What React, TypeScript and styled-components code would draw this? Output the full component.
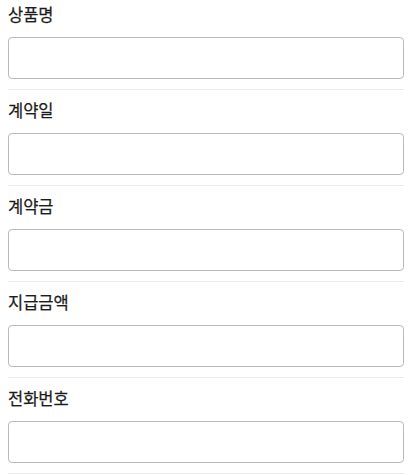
import React from "react";
import styled, { createGlobalStyle } from "styled-components";

const Global = createGlobalStyle`
  html, body { margin: 0; padding: 0; background: #fff; }
  body { font-family: "Noto Sans CJK KR", "Noto Sans", sans-serif; }
`;

const Form = styled.div`
  padding: 0 13px 0 8px;
  display: flex;
  flex-direction: column;
`;

const Field = styled.div`
  display: flex;
  flex-direction: column;
  padding: 10px 0 10px;
  border-bottom: 1px solid #ebebeb;
  &:first-child { padding-top: 4px; }
`;

const Label = styled.label`
  font-size: 16.5px;
  font-weight: 400;
  line-height: 20px;
  color: #1c1c1c;
  margin-bottom: 13px;
  -webkit-text-stroke: 0.25px #1c1c1c;
`;

const Input = styled.input`
  box-sizing: border-box;
  height: 42px;
  width: 100%;
  border: 1px solid #b9b9b9;
  border-radius: 4px;
  padding: 0 10px;
  font: inherit;
  font-size: 15px;
  outline: none;
  background: #fff;
`;

const labels = ["상품명", "계약일", "계약금", "지급금액", "전화번호"];

export default function App() {
  return (
    <>
      <Global />
      <Form>
        {labels.map((l) => (
          <Field key={l}>
            <Label>{l}</Label>
            <Input type="text" />
          </Field>
        ))}
      </Form>
    </>
  );
}
